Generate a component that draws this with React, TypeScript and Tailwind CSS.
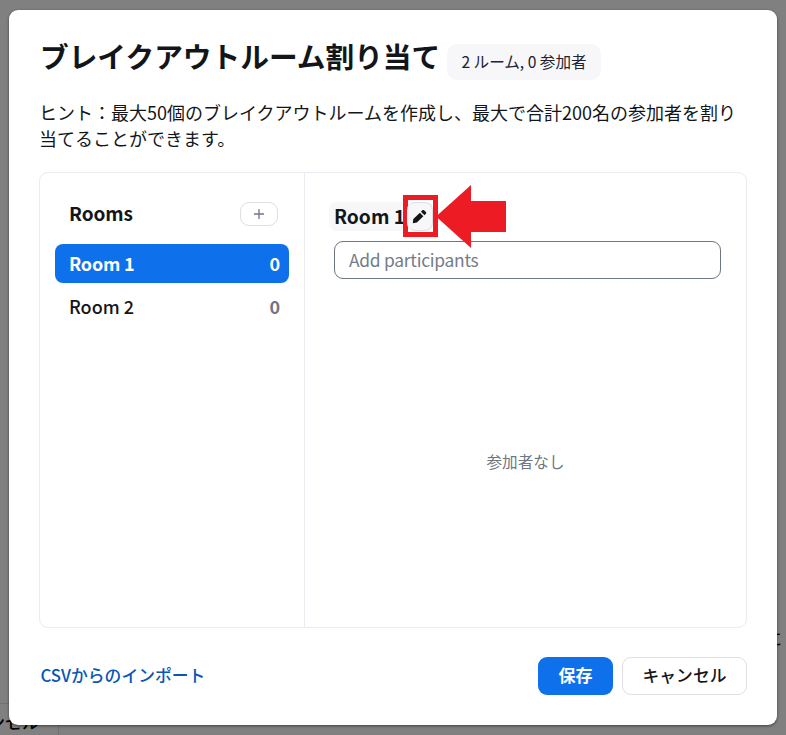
const rooms = [
  { name: "Room 1", count: 0, active: true },
  { name: "Room 2", count: 0, active: false },
];

const PencilIcon = () => (
  <svg width="15" height="15" viewBox="0 0 16 16" fill="#131619">
    <path d="M.8 15.200l.6-4.6L8.400 3.900l3.700 3.800-6.900 6.700-4.400.8z" />
    <path d="M9.500 2.900l1.500-1.500c.6-.6 1.300-.6 1.900 0l1.900 1.800c.6.6.6 1.300 0 1.900l-1.500 1.500L9.500 2.900z" />
  </svg>
);

const RoomList = () => (
  <div className="flex w-[265px] flex-col border-r border-[#ebebf2] pt-[29px] pr-[15px] pl-[15px]">
    <div className="flex h-6 items-center justify-between pr-[11px] pl-[14px]">
      <h2 className="pb-0.5 text-[19px] leading-[22px] font-bold tracking-[-0.1px]">Rooms</h2>
      <button className="flex h-6 w-[38px] items-center justify-center rounded-[9px] border border-[#dfdfe5]">
        <svg width="10" height="10" viewBox="0 0 10 10" stroke="#747487" strokeWidth="1.3">
          <path d="M5 0v10M0 5h10" />
        </svg>
      </button>
    </div>
    <ul className="mt-[18px] flex flex-col gap-1">
      {rooms.map((room) => (
        <li
          key={room.name}
          className={
            room.active
              ? "flex h-[39px] items-center justify-between rounded-lg bg-[#0e71eb] pr-[9px] pb-px pl-[14px] text-[18px] font-bold tracking-[-0.2px] text-white"
              : "flex h-[39px] items-center justify-between rounded-lg pr-[9px] pb-px pl-[14px] text-[18px] font-medium"
          }
        >
          <span>{room.name}</span>
          <span className={room.active ? "tracking-normal" : "font-bold text-[#747487]"}>{room.count}</span>
        </li>
      ))}
    </ul>
  </div>
);

const RoomDetail = () => (
  <div className="flex flex-1 flex-col pt-[29px] pr-[25px] pl-[25px]">
    <div className="relative -ml-px flex h-[29px] w-[105px] items-center rounded-lg bg-[#f7f7f9] pl-[5px]">
      <h3 className="pb-0.5 text-[19.2px] leading-[22px] font-bold whitespace-nowrap">Room 1</h3>
      <div className="absolute -top-[7px] left-[74px] flex h-[42px] w-[35px] border-5 border-[#ed1c24] bg-white">
        <button className="-ml-px flex h-[29px] flex-1 items-center justify-center self-center rounded-lg border border-l-0 border-[#dfdfe5] bg-[#f7f7f9]">
          <PencilIcon />
        </button>
      </div>
      <svg className="absolute -top-[17px] left-[107px]" width="70" height="63" viewBox="0 0 70 63" fill="#ed1c24">
        <path d="M0 31.500L35 0v16h35v31H35v16z" />
      </svg>
    </div>
    <div className="mt-[10px] ml-1 flex h-[38px] items-center rounded-[9px] border border-[#6e7680] pl-[14px] text-[17.4px] tracking-[-0.25px] text-[#747c87]">
      Add participants
    </div>
    <div className="mt-[170px] text-center text-[15.6px] leading-6 text-[#6e7680]">参加者なし</div>
  </div>
);

const App = () => (
  <div className="relative h-[735px] w-[786px] overflow-hidden bg-[#808080] px-[9px] pt-[10px] font-['Noto_Sans_CJK_JP',sans-serif] text-[#131619]">
    <div className="absolute top-[703px] -left-[66px] flex h-[38px] w-[125px] items-center justify-center rounded-lg border border-[#707073] text-[17px] font-medium text-black">
      キャンセル
    </div>
    <div className="absolute top-[625px] left-[765px] text-[17px] text-black">に</div>
    <div className="relative flex h-[715px] w-[768px] flex-col rounded-[9px] bg-white px-[30px] shadow-[0_1px_3px_rgba(0,0,0,0.5)]">
      <div className="flex h-[70px] items-end">
        <h1 className="mb-2 w-[408px] pl-px text-[28.7px] leading-[32px] font-bold whitespace-nowrap">ブレイクアウトルーム割り当て</h1>
        <div className="flex h-9 w-[154px] items-center justify-center rounded-[10px] bg-[#f7f7fa] text-[15.6px] whitespace-nowrap text-[#222230]">
          2 ルーム, 0 参加者
        </div>
      </div>
      <p className="mt-[19px] text-[18px] leading-[26px]">
        ヒント：最大50個のブレイクアウトルームを作成し、最大で合計200名の参加者を割り
        <br />
        当てることができます。
      </p>
      <div className="mt-[21px] flex h-[456px] rounded-[9px] border border-[#ebebf2]">
        <RoomList />
        <RoomDetail />
      </div>
      <div className="mt-[29px] flex h-[38px] items-center gap-[9px]">
        <a className="mr-auto pl-[1.5px] text-[16.8px] font-medium text-[#0956b5]">CSVからのインポート</a>
        <button className="h-[38px] w-[75px] rounded-[9px] bg-[#0e71eb] pb-0.5 text-[17px] font-bold text-white">保存</button>
        <button className="h-[38px] w-[125px] rounded-[9px] border border-[#dfdfe5] text-[16.8px] font-medium">キャンセル</button>
      </div>
    </div>
  </div>
);

export default App;
